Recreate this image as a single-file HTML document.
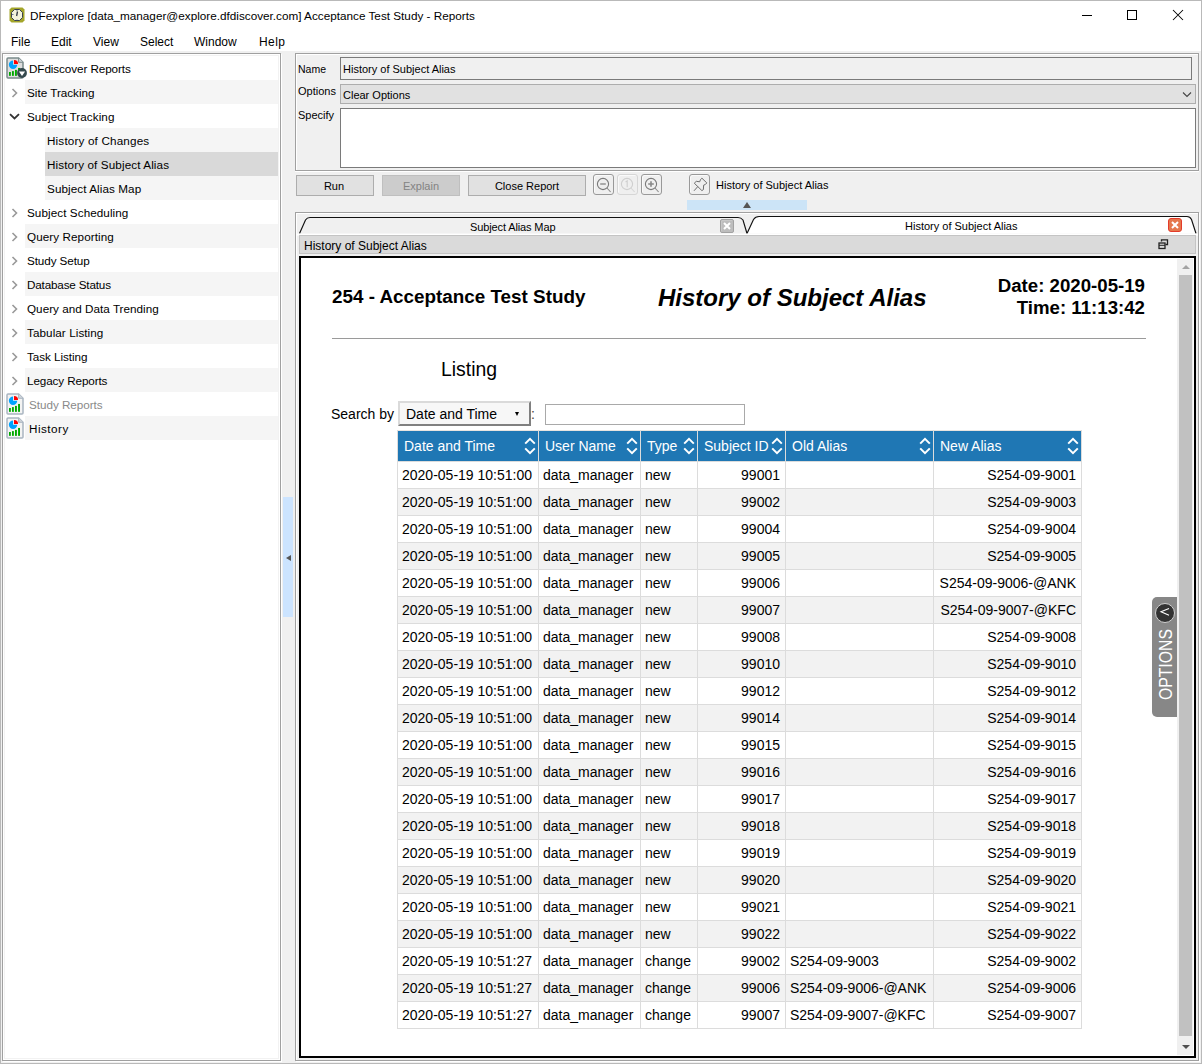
<!DOCTYPE html>
<html><head><meta charset="utf-8">
<style>
*{box-sizing:border-box;margin:0;padding:0}
html,body{width:1202px;height:1064px;overflow:hidden;background:#f0f0f0;font-family:"Liberation Sans",sans-serif;color:#000}
.a{position:absolute}
.t{position:absolute;white-space:nowrap;line-height:1}
#win{position:absolute;left:0;top:0;width:1202px;height:1064px;border:1px solid #b9b9b9;}
#title{left:1px;top:1px;width:1200px;height:50px;background:#fff}
.menu{font-size:12px;top:36px}
.side{font-size:11.7px}
.row{position:absolute;height:24px}
.g{background:#f5f5f5}
.chev{position:absolute;width:6px;height:6px;border-right:1.3px solid #8a8a8a;border-bottom:1.3px solid #8a8a8a}
.btn{position:absolute;background:#e1e1e1;border:1px solid #adadad;font-size:11px;text-align:center;line-height:20px}
.ib{position:absolute;width:21px;height:21px;border:1px solid #999;border-radius:3px;background:#efefef;box-shadow:inset 1px 1px 0 #fafafa}
</style></head><body>
<div id="win"></div>
<div class="a" id="title"></div>
<!-- title icon -->
<svg class="a" style="left:9px;top:7px" width="16" height="16" viewBox="0 0 16 16"><path d="M2.5 0.5H13.5L15.5 2.5V13.5L13.5 15.5H2.5L0.5 13.5V2.5Z" fill="#a3a52a"/><path d="M5.5 2.5H10.5L13.5 5.5V10.5L10.5 13.5H5.5L2.5 10.5V5.5Z" fill="#f3f3dc" stroke="#3a4250" stroke-width="1"/><path d="M8.5 4.5L7.6 9" stroke="#2f3540" stroke-width="1.3"/><path d="M3 7.5H4.5M8 3V4M8 12.5V13.5" stroke="#4a5a80" stroke-width="0.8"/></svg>
<div class="t" style="left:30px;top:10px;font-size:11.74px">DFexplore [data_manager@explore.dfdiscover.com] Acceptance Test Study - Reports</div>
<!-- window controls -->
<div class="a" style="left:1082px;top:15px;width:10px;height:1px;background:#000"></div>
<div class="a" style="left:1127px;top:10px;width:10px;height:10px;border:1px solid #000"></div>
<svg class="a" style="left:1172px;top:9px" width="12" height="12"><path d="M1 1L11 11M11 1L1 11" stroke="#000" stroke-width="1.05"/></svg>
<!-- menu -->
<div class="t menu" style="left:11px">File</div>
<div class="t menu" style="left:51px">Edit</div>
<div class="t menu" style="left:93px">View</div>
<div class="t menu" style="left:140px">Select</div>
<div class="t menu" style="left:194px">Window</div>
<div class="t menu" style="left:259px;letter-spacing:0.4px">Help</div>

<!-- left panel -->
<div class="a" style="left:2px;top:53px;width:279px;height:1008px;border:1px solid #a0a0a0;background:#fff;box-shadow:1px 1px 0 #fff, inset 0 0 0 1px #fff, inset 0 0 0 2px #f2f2f2"></div>
<div id="side">
<svg class="a" style="left:5px;top:56px" width="24" height="24" viewBox="0 0 24 24"><path d="M3 1.9H13.6L18 6.3V21Q18 22 17 22H3Q2 22 2 21V2.9Q2 1.9 3 1.9Z" fill="#dedede" stroke="#7a8a8a" stroke-width="1.5"/><path d="M13.6 1.9V6.3H18" fill="#cfd5da" stroke="#7a8a8a" stroke-width="1"/><path d="M8.05 8.8V4.6A4.2 4.2 0 1 0 12.25 8.8Z" fill="#00a2ff"/><path d="M9 8V3.9A4.1 4.1 0 0 1 13.1 8Z" fill="#ff0000"/><rect x="4" y="16" width="1.85" height="3.85" fill="#00aa00"/><rect x="7" y="15.1" width="1.85" height="4.75" fill="#00aa00"/><rect x="10" y="13.9" width="1.9" height="5.95" fill="#00aa00"/><rect x="13.05" y="11.95" width="1.95" height="7.9" fill="#00aa00"/><circle cx="17" cy="17" r="4.9" fill="#34494d"/><path d="M13.9 15.4H20.1L17 19.9Z" fill="#fff"/></svg>
<div class="t side" style="left:29px;top:63px;color:#000;letter-spacing:-0.088px">DFdiscover Reports</div>
<div class="row g" style="left:25px;top:80px;width:253px"></div>
<svg class="a" style="left:11px;top:88px" width="8" height="10"><path d="M1.5 1L5.5 5L1.5 9" stroke="#999" stroke-width="1.6" fill="none"/></svg>
<div class="t side" style="left:27px;top:87px;color:#000;letter-spacing:0px">Site Tracking</div>
<svg class="a" style="left:9px;top:113px" width="11" height="7"><path d="M1 1.2L5.5 5.5L10 1.2" stroke="#333" stroke-width="1.8" fill="none"/></svg>
<div class="t side" style="left:27px;top:111px;color:#000;letter-spacing:0.067px">Subject Tracking</div>
<div class="row g" style="left:45px;top:128px;width:233px"></div>
<div class="t side" style="left:47px;top:135px;color:#000;letter-spacing:0.165px">History of Changes</div>
<div class="row" style="left:45px;top:152px;width:233px;background:#d9d9d9"></div>
<div class="t side" style="left:47px;top:159px;color:#000;letter-spacing:0.109px">History of Subject Alias</div>
<div class="row g" style="left:45px;top:176px;width:233px"></div>
<div class="t side" style="left:47px;top:183px;color:#000;letter-spacing:0.081px">Subject Alias Map</div>
<svg class="a" style="left:11px;top:208px" width="8" height="10"><path d="M1.5 1L5.5 5L1.5 9" stroke="#999" stroke-width="1.6" fill="none"/></svg>
<div class="t side" style="left:27px;top:207px;color:#000;letter-spacing:0.076px">Subject Scheduling</div>
<div class="row g" style="left:25px;top:224px;width:253px"></div>
<svg class="a" style="left:11px;top:232px" width="8" height="10"><path d="M1.5 1L5.5 5L1.5 9" stroke="#999" stroke-width="1.6" fill="none"/></svg>
<div class="t side" style="left:27px;top:231px;color:#000;letter-spacing:0.071px">Query Reporting</div>
<svg class="a" style="left:11px;top:256px" width="8" height="10"><path d="M1.5 1L5.5 5L1.5 9" stroke="#999" stroke-width="1.6" fill="none"/></svg>
<div class="t side" style="left:27px;top:255px;color:#000;letter-spacing:-0.1px">Study Setup</div>
<div class="row g" style="left:25px;top:272px;width:253px"></div>
<svg class="a" style="left:11px;top:280px" width="8" height="10"><path d="M1.5 1L5.5 5L1.5 9" stroke="#999" stroke-width="1.6" fill="none"/></svg>
<div class="t side" style="left:27px;top:279px;color:#000;letter-spacing:-0.171px">Database Status</div>
<svg class="a" style="left:11px;top:304px" width="8" height="10"><path d="M1.5 1L5.5 5L1.5 9" stroke="#999" stroke-width="1.6" fill="none"/></svg>
<div class="t side" style="left:27px;top:303px;color:#000;letter-spacing:0.023px">Query and Data Trending</div>
<div class="row g" style="left:25px;top:320px;width:253px"></div>
<svg class="a" style="left:11px;top:328px" width="8" height="10"><path d="M1.5 1L5.5 5L1.5 9" stroke="#999" stroke-width="1.6" fill="none"/></svg>
<div class="t side" style="left:27px;top:327px;color:#000;letter-spacing:0.071px">Tabular Listing</div>
<svg class="a" style="left:11px;top:352px" width="8" height="10"><path d="M1.5 1L5.5 5L1.5 9" stroke="#999" stroke-width="1.6" fill="none"/></svg>
<div class="t side" style="left:27px;top:351px;color:#000;letter-spacing:-0.055px">Task Listing</div>
<div class="row g" style="left:25px;top:368px;width:253px"></div>
<svg class="a" style="left:11px;top:376px" width="8" height="10"><path d="M1.5 1L5.5 5L1.5 9" stroke="#999" stroke-width="1.6" fill="none"/></svg>
<div class="t side" style="left:27px;top:375px;color:#000;letter-spacing:-0.108px">Legacy Reports</div>
<svg class="a" style="left:5px;top:392px" width="24" height="24" viewBox="0 0 24 24"><path d="M3 1.9H13.6L18 6.3V21Q18 22 17 22H3Q2 22 2 21V2.9Q2 1.9 3 1.9Z" fill="#f3f3f3" stroke="#a9b5c1" stroke-width="1.5"/><path d="M13.6 1.9V6.3H18" fill="#cfd5da" stroke="#a9b5c1" stroke-width="1"/><path d="M8.05 8.8V4.6A4.2 4.2 0 1 0 12.25 8.8Z" fill="#00a2ff"/><path d="M9 8V3.9A4.1 4.1 0 0 1 13.1 8Z" fill="#ff0000"/><rect x="4" y="16" width="1.85" height="3.85" fill="#00aa00"/><rect x="7" y="15.1" width="1.85" height="4.75" fill="#00aa00"/><rect x="10" y="13.9" width="1.9" height="5.95" fill="#00aa00"/><rect x="13.05" y="11.95" width="1.95" height="7.9" fill="#00aa00"/></svg>
<div class="t side" style="left:29px;top:399px;color:#8a8a8a;letter-spacing:-0.033px">Study Reports</div>
<div class="row g" style="left:25px;top:416px;width:253px"></div>
<svg class="a" style="left:5px;top:416px" width="24" height="24" viewBox="0 0 24 24"><path d="M3 1.9H13.6L18 6.3V21Q18 22 17 22H3Q2 22 2 21V2.9Q2 1.9 3 1.9Z" fill="#f3f3f3" stroke="#a9b5c1" stroke-width="1.5"/><path d="M13.6 1.9V6.3H18" fill="#cfd5da" stroke="#a9b5c1" stroke-width="1"/><path d="M8.05 8.8V4.6A4.2 4.2 0 1 0 12.25 8.8Z" fill="#00a2ff"/><path d="M9 8V3.9A4.1 4.1 0 0 1 13.1 8Z" fill="#ff0000"/><rect x="4" y="16" width="1.85" height="3.85" fill="#00aa00"/><rect x="7" y="15.1" width="1.85" height="4.75" fill="#00aa00"/><rect x="10" y="13.9" width="1.9" height="5.95" fill="#00aa00"/><rect x="13.05" y="11.95" width="1.95" height="7.9" fill="#00aa00"/></svg>
<div class="t side" style="left:29px;top:423px;color:#000;letter-spacing:0.48px">History</div>
</div>

<!-- splitter handle -->
<div class="a" style="left:283px;top:497px;width:10px;height:120px;background:#cce4ff"></div>
<div class="a" style="left:286px;top:554.5px;width:0;height:0;border-top:3.5px solid transparent;border-bottom:3.5px solid transparent;border-right:5px solid #555"></div>

<!-- right group box -->
<div class="a" style="left:295px;top:53px;width:904px;height:118px;border:1px solid #a0a0a0;box-shadow:inset 1px 1px 0 #fff, 0 1px 0 #fff"></div>
<div class="t" style="left:298px;top:64px;font-size:10.5px">Name</div>
<div class="a" style="left:340px;top:57px;width:852px;height:23px;border:1px solid #7a7a7a;background:#f0f0f0"></div>
<div class="t" style="left:343px;top:64px;font-size:11px">History of Subject Alias</div>
<div class="t" style="left:298px;top:86px;font-size:11px">Options</div>
<div class="a" style="left:340px;top:84px;width:856px;height:20px;border:1px solid #adadad;background:#e1e1e1"></div>
<div class="t" style="left:343px;top:90px;font-size:11px">Clear Options</div>
<svg class="a" style="left:1181px;top:90px" width="12" height="9"><path d="M2 2.5L6 6.5L10 2.5" stroke="#444" stroke-width="1.1" fill="none"/></svg>
<div class="t" style="left:298px;top:110px;font-size:11px">Specify</div>
<div class="a" style="left:340px;top:108px;width:856px;height:60px;border:1px solid #7a7a7a;background:#fff"></div>

<!-- buttons -->
<div class="btn" style="left:296px;top:175px;width:78px;height:21px;padding-right:2px">Run</div>
<div class="btn" style="left:382px;top:175px;width:78px;height:21px;background:#cccccc;border-color:#bfbfbf;color:#838383">Explain</div>
<div class="btn" style="left:468px;top:175px;width:118px;height:21px">Close Report</div>
<div class="ib" style="left:593px;top:174px"></div>
<svg class="a" style="left:593px;top:174px" width="21" height="21"><circle cx="10" cy="10" r="5.6" fill="none" stroke="#7a7a7a" stroke-width="1.1"/><path d="M7.2 10H12.8" stroke="#999" stroke-width="1.6"/><path d="M14 14L17.6 18" stroke="#8a8a8a" stroke-width="1.1"/></svg>
<div class="ib" style="left:617px;top:174px;border-color:#d6d6d6"></div>
<svg class="a" style="left:617px;top:174px" width="21" height="21"><circle cx="10" cy="10" r="5.6" fill="none" stroke="#cfcfcf" stroke-width="1.1"/><path d="M8.6 8L10.2 6.8V13.2" fill="none" stroke="#cfcfcf" stroke-width="1.1"/><path d="M14 14L17.6 18" stroke="#d6d6d6" stroke-width="1.1"/></svg>
<div class="ib" style="left:641px;top:174px"></div>
<svg class="a" style="left:641px;top:174px" width="21" height="21"><circle cx="10" cy="10" r="5.6" fill="none" stroke="#7a7a7a" stroke-width="1.1"/><path d="M7.2 10H12.8M10 7.2V12.8" stroke="#888" stroke-width="1.6"/><path d="M14 14L17.6 18" stroke="#8a8a8a" stroke-width="1.1"/></svg>
<div class="ib" style="left:689px;top:174px"></div>
<svg class="a" style="left:689px;top:174px" width="21" height="21"><path d="M12.9 4.2L17.8 8.9L16.3 10.5L14.6 11.2L14.4 15.6L12.9 16.6L5.3 9.2L7.3 7.3L10.7 7.8L11.4 5.8Z" fill="none" stroke="#6e6e6e" stroke-width="1" stroke-linejoin="round"/><path d="M8.7 12.7L5 16.8" stroke="#6e6e6e" stroke-width="1"/></svg>
<div class="t" style="left:716px;top:180px;font-size:11px">History of Subject Alias</div>
<div class="a" style="left:687px;top:200px;width:120px;height:10px;background:#cce4f7"></div>
<div class="a" style="left:743px;top:202px;width:0;height:0;border-left:4px solid transparent;border-right:4px solid transparent;border-bottom:6px solid #555"></div>

<!-- tab frame -->
<div class="a" style="left:295px;top:212px;width:904px;height:849px;border:1px solid #a0a0a0;box-shadow:inset 1px 1px 0 #fff, 1px 1px 0 #fff"></div>
<div id="tabs">
<svg class="a" style="left:295px;top:212px" width="904" height="24" viewBox="0 0 904 24">
<path d="M4.5 21.5L10.5 8Q12 5.5 15 5.5H443Q446 5.5 448 8L452 21.5" fill="#f0f0f0" stroke="#111" stroke-width="1.15"/>
<path d="M452 21.5L458.5 7.5Q460.5 4.5 464 4.5H892Q895 4.5 896.5 7.5L901 21.5" fill="#fff" stroke="#111" stroke-width="1.15"/>
<rect x="1" y="21.6" width="902" height="2" fill="#fff"/>
</svg>
<div class="a" style="left:720px;top:219px;width:14px;height:14px;border-radius:2px;background:#bdbdbd;border:1px solid #a2a2a2;box-shadow:inset 1px 1px 0 #c8c8c8"></div>
<svg class="a" style="left:720px;top:219px" width="14" height="14"><path d="M4 4L10 10M10 4L4 10" stroke="#fff" stroke-width="2"/></svg>
<div class="a" style="left:1168px;top:218px;width:14px;height:14px;border-radius:3px;background:#e5774d;border:1px solid #e33b2a"></div>
<svg class="a" style="left:1168px;top:218px" width="14" height="14"><path d="M4 4L10 10M10 4L4 10" stroke="#fff" stroke-width="2"/></svg>
<div class="t" style="left:470px;top:222px;font-size:11px;letter-spacing:-0.12px">Subject Alias Map</div>
<div class="t" style="left:905px;top:221px;font-size:11px">History of Subject Alias</div>

</div>
<div class="a" style="left:299px;top:235px;width:897px;height:19px;background:#dadada;border:1px solid #c4c4c4"></div>
<div class="t" style="left:304px;top:240px;font-size:12px">History of Subject Alias</div>
<svg class="a" style="left:1158px;top:239px" width="11" height="11"><path d="M3.5 2.5V0.8H9.5V5.5H7.5" fill="none" stroke="#222" stroke-width="1.3"/><rect x="1" y="4" width="6" height="5.5" fill="none" stroke="#222" stroke-width="1.3"/><path d="M1 6.3H7" stroke="#222" stroke-width="1"/></svg>

<!-- report -->
<div class="a" style="left:299px;top:256px;width:897px;height:802px;border:2px solid #000;background:#fff"></div>
<div id="report">
<div class="t" style="left:332px;top:288px;font-size:18.85px;font-weight:bold">254 - Acceptance Test Study</div>
<div class="t" style="left:658px;top:286px;font-size:24px;font-weight:bold;font-style:italic">History of Subject Alias</div>
<div class="t" style="right:57px;top:275px;font-size:18.67px;font-weight:bold;text-align:right;line-height:22px">Date: 2020-05-19<br>Time: 11:13:42</div>
<div class="a" style="left:332px;top:338px;width:814px;height:1px;background:#9a9a9a"></div>
<div class="t" style="left:441px;top:360px;font-size:19.4px">Listing</div>
<div class="t" style="left:331px;top:407px;font-size:14px">Search by</div>
<div class="a" style="left:398px;top:401px;width:133px;height:25px;border:2px solid;border-color:#dadada #808080 #808080 #dadada;background:#f7f7f7"></div>
<div class="t" style="left:406px;top:407px;font-size:14px">Date and Time</div>
<div class="a" style="left:515px;top:412px;width:0;height:0;border-left:2.6px solid transparent;border-right:2.6px solid transparent;border-top:4.5px solid #000"></div>
<div class="t" style="left:531px;top:407px;font-size:14px;color:#444">:</div>
<div class="a" style="left:545px;top:404px;width:200px;height:21px;border:1px solid #a9a9a9;background:#fff"></div>
<div class="a" style="left:398px;top:431px;width:683px;height:30px;background:#1f77b4"></div>
<div class="a" style="left:398px;top:488px;width:683px;height:27px;background:#f2f2f2"></div>
<div class="a" style="left:398px;top:542px;width:683px;height:27px;background:#f2f2f2"></div>
<div class="a" style="left:398px;top:596px;width:683px;height:27px;background:#f2f2f2"></div>
<div class="a" style="left:398px;top:650px;width:683px;height:27px;background:#f2f2f2"></div>
<div class="a" style="left:398px;top:704px;width:683px;height:27px;background:#f2f2f2"></div>
<div class="a" style="left:398px;top:758px;width:683px;height:27px;background:#f2f2f2"></div>
<div class="a" style="left:398px;top:812px;width:683px;height:27px;background:#f2f2f2"></div>
<div class="a" style="left:398px;top:866px;width:683px;height:27px;background:#f2f2f2"></div>
<div class="a" style="left:398px;top:920px;width:683px;height:27px;background:#f2f2f2"></div>
<div class="a" style="left:398px;top:974px;width:683px;height:27px;background:#f2f2f2"></div>
<div class="a" style="left:397px;top:461px;width:685px;height:1px;background:#dcdcdc"></div>
<div class="a" style="left:397px;top:488px;width:685px;height:1px;background:#dcdcdc"></div>
<div class="a" style="left:397px;top:515px;width:685px;height:1px;background:#dcdcdc"></div>
<div class="a" style="left:397px;top:542px;width:685px;height:1px;background:#dcdcdc"></div>
<div class="a" style="left:397px;top:569px;width:685px;height:1px;background:#dcdcdc"></div>
<div class="a" style="left:397px;top:596px;width:685px;height:1px;background:#dcdcdc"></div>
<div class="a" style="left:397px;top:623px;width:685px;height:1px;background:#dcdcdc"></div>
<div class="a" style="left:397px;top:650px;width:685px;height:1px;background:#dcdcdc"></div>
<div class="a" style="left:397px;top:677px;width:685px;height:1px;background:#dcdcdc"></div>
<div class="a" style="left:397px;top:704px;width:685px;height:1px;background:#dcdcdc"></div>
<div class="a" style="left:397px;top:731px;width:685px;height:1px;background:#dcdcdc"></div>
<div class="a" style="left:397px;top:758px;width:685px;height:1px;background:#dcdcdc"></div>
<div class="a" style="left:397px;top:785px;width:685px;height:1px;background:#dcdcdc"></div>
<div class="a" style="left:397px;top:812px;width:685px;height:1px;background:#dcdcdc"></div>
<div class="a" style="left:397px;top:839px;width:685px;height:1px;background:#dcdcdc"></div>
<div class="a" style="left:397px;top:866px;width:685px;height:1px;background:#dcdcdc"></div>
<div class="a" style="left:397px;top:893px;width:685px;height:1px;background:#dcdcdc"></div>
<div class="a" style="left:397px;top:920px;width:685px;height:1px;background:#dcdcdc"></div>
<div class="a" style="left:397px;top:947px;width:685px;height:1px;background:#dcdcdc"></div>
<div class="a" style="left:397px;top:974px;width:685px;height:1px;background:#dcdcdc"></div>
<div class="a" style="left:397px;top:1001px;width:685px;height:1px;background:#dcdcdc"></div>
<div class="a" style="left:397px;top:1028px;width:685px;height:1px;background:#dcdcdc"></div>
<div class="a" style="left:397px;top:430px;width:685px;height:1px;background:#e8e4e0"></div>
<div class="a" style="left:397px;top:430px;width:1px;height:599px;background:#dcdcdc"></div>
<div class="a" style="left:538px;top:430px;width:1px;height:599px;background:#dcdcdc"></div>
<div class="a" style="left:640px;top:430px;width:1px;height:599px;background:#dcdcdc"></div>
<div class="a" style="left:697px;top:430px;width:1px;height:599px;background:#dcdcdc"></div>
<div class="a" style="left:785px;top:430px;width:1px;height:599px;background:#dcdcdc"></div>
<div class="a" style="left:933px;top:430px;width:1px;height:599px;background:#dcdcdc"></div>
<div class="a" style="left:1081px;top:430px;width:1px;height:599px;background:#dcdcdc"></div>
<div class="t" style="left:404px;top:439px;font-size:14px;color:#fff">Date and Time</div>
<svg class="a" style="left:524px;top:437px" width="12" height="18"><path d="M1.2 6.6L6 1.8L10.8 6.6M1.2 11.4L6 16.2L10.8 11.4" stroke="#fff" stroke-width="2" fill="none"/></svg>
<div class="t" style="left:545px;top:439px;font-size:14px;color:#fff">User Name</div>
<svg class="a" style="left:626px;top:437px" width="12" height="18"><path d="M1.2 6.6L6 1.8L10.8 6.6M1.2 11.4L6 16.2L10.8 11.4" stroke="#fff" stroke-width="2" fill="none"/></svg>
<div class="t" style="left:647px;top:439px;font-size:14px;color:#fff">Type</div>
<svg class="a" style="left:683px;top:437px" width="12" height="18"><path d="M1.2 6.6L6 1.8L10.8 6.6M1.2 11.4L6 16.2L10.8 11.4" stroke="#fff" stroke-width="2" fill="none"/></svg>
<div class="t" style="left:704px;top:439px;font-size:14px;color:#fff">Subject ID</div>
<svg class="a" style="left:771px;top:437px" width="12" height="18"><path d="M1.2 6.6L6 1.8L10.8 6.6M1.2 11.4L6 16.2L10.8 11.4" stroke="#fff" stroke-width="2" fill="none"/></svg>
<div class="t" style="left:792px;top:439px;font-size:14px;color:#fff">Old Alias</div>
<svg class="a" style="left:919px;top:437px" width="12" height="18"><path d="M1.2 6.6L6 1.8L10.8 6.6M1.2 11.4L6 16.2L10.8 11.4" stroke="#fff" stroke-width="2" fill="none"/></svg>
<div class="t" style="left:940px;top:439px;font-size:14px;color:#fff">New Alias</div>
<svg class="a" style="left:1067px;top:437px" width="12" height="18"><path d="M1.2 6.6L6 1.8L10.8 6.6M1.2 11.4L6 16.2L10.8 11.4" stroke="#fff" stroke-width="2" fill="none"/></svg>
<div class="t" style="left:402px;top:468px;font-size:14px">2020-05-19 10:51:00</div>
<div class="t" style="left:543px;top:468px;font-size:14px">data_manager</div>
<div class="t" style="left:645px;top:468px;font-size:14px">new</div>
<div class="t" style="right:422px;top:468px;font-size:14px">99001</div>
<div class="t" style="right:126px;top:468px;font-size:14px">S254-09-9001</div>
<div class="t" style="left:402px;top:495px;font-size:14px">2020-05-19 10:51:00</div>
<div class="t" style="left:543px;top:495px;font-size:14px">data_manager</div>
<div class="t" style="left:645px;top:495px;font-size:14px">new</div>
<div class="t" style="right:422px;top:495px;font-size:14px">99002</div>
<div class="t" style="right:126px;top:495px;font-size:14px">S254-09-9003</div>
<div class="t" style="left:402px;top:522px;font-size:14px">2020-05-19 10:51:00</div>
<div class="t" style="left:543px;top:522px;font-size:14px">data_manager</div>
<div class="t" style="left:645px;top:522px;font-size:14px">new</div>
<div class="t" style="right:422px;top:522px;font-size:14px">99004</div>
<div class="t" style="right:126px;top:522px;font-size:14px">S254-09-9004</div>
<div class="t" style="left:402px;top:549px;font-size:14px">2020-05-19 10:51:00</div>
<div class="t" style="left:543px;top:549px;font-size:14px">data_manager</div>
<div class="t" style="left:645px;top:549px;font-size:14px">new</div>
<div class="t" style="right:422px;top:549px;font-size:14px">99005</div>
<div class="t" style="right:126px;top:549px;font-size:14px">S254-09-9005</div>
<div class="t" style="left:402px;top:576px;font-size:14px">2020-05-19 10:51:00</div>
<div class="t" style="left:543px;top:576px;font-size:14px">data_manager</div>
<div class="t" style="left:645px;top:576px;font-size:14px">new</div>
<div class="t" style="right:422px;top:576px;font-size:14px">99006</div>
<div class="t" style="right:126px;top:576px;font-size:14px">S254-09-9006-@ANK</div>
<div class="t" style="left:402px;top:603px;font-size:14px">2020-05-19 10:51:00</div>
<div class="t" style="left:543px;top:603px;font-size:14px">data_manager</div>
<div class="t" style="left:645px;top:603px;font-size:14px">new</div>
<div class="t" style="right:422px;top:603px;font-size:14px">99007</div>
<div class="t" style="right:126px;top:603px;font-size:14px">S254-09-9007-@KFC</div>
<div class="t" style="left:402px;top:630px;font-size:14px">2020-05-19 10:51:00</div>
<div class="t" style="left:543px;top:630px;font-size:14px">data_manager</div>
<div class="t" style="left:645px;top:630px;font-size:14px">new</div>
<div class="t" style="right:422px;top:630px;font-size:14px">99008</div>
<div class="t" style="right:126px;top:630px;font-size:14px">S254-09-9008</div>
<div class="t" style="left:402px;top:657px;font-size:14px">2020-05-19 10:51:00</div>
<div class="t" style="left:543px;top:657px;font-size:14px">data_manager</div>
<div class="t" style="left:645px;top:657px;font-size:14px">new</div>
<div class="t" style="right:422px;top:657px;font-size:14px">99010</div>
<div class="t" style="right:126px;top:657px;font-size:14px">S254-09-9010</div>
<div class="t" style="left:402px;top:684px;font-size:14px">2020-05-19 10:51:00</div>
<div class="t" style="left:543px;top:684px;font-size:14px">data_manager</div>
<div class="t" style="left:645px;top:684px;font-size:14px">new</div>
<div class="t" style="right:422px;top:684px;font-size:14px">99012</div>
<div class="t" style="right:126px;top:684px;font-size:14px">S254-09-9012</div>
<div class="t" style="left:402px;top:711px;font-size:14px">2020-05-19 10:51:00</div>
<div class="t" style="left:543px;top:711px;font-size:14px">data_manager</div>
<div class="t" style="left:645px;top:711px;font-size:14px">new</div>
<div class="t" style="right:422px;top:711px;font-size:14px">99014</div>
<div class="t" style="right:126px;top:711px;font-size:14px">S254-09-9014</div>
<div class="t" style="left:402px;top:738px;font-size:14px">2020-05-19 10:51:00</div>
<div class="t" style="left:543px;top:738px;font-size:14px">data_manager</div>
<div class="t" style="left:645px;top:738px;font-size:14px">new</div>
<div class="t" style="right:422px;top:738px;font-size:14px">99015</div>
<div class="t" style="right:126px;top:738px;font-size:14px">S254-09-9015</div>
<div class="t" style="left:402px;top:765px;font-size:14px">2020-05-19 10:51:00</div>
<div class="t" style="left:543px;top:765px;font-size:14px">data_manager</div>
<div class="t" style="left:645px;top:765px;font-size:14px">new</div>
<div class="t" style="right:422px;top:765px;font-size:14px">99016</div>
<div class="t" style="right:126px;top:765px;font-size:14px">S254-09-9016</div>
<div class="t" style="left:402px;top:792px;font-size:14px">2020-05-19 10:51:00</div>
<div class="t" style="left:543px;top:792px;font-size:14px">data_manager</div>
<div class="t" style="left:645px;top:792px;font-size:14px">new</div>
<div class="t" style="right:422px;top:792px;font-size:14px">99017</div>
<div class="t" style="right:126px;top:792px;font-size:14px">S254-09-9017</div>
<div class="t" style="left:402px;top:819px;font-size:14px">2020-05-19 10:51:00</div>
<div class="t" style="left:543px;top:819px;font-size:14px">data_manager</div>
<div class="t" style="left:645px;top:819px;font-size:14px">new</div>
<div class="t" style="right:422px;top:819px;font-size:14px">99018</div>
<div class="t" style="right:126px;top:819px;font-size:14px">S254-09-9018</div>
<div class="t" style="left:402px;top:846px;font-size:14px">2020-05-19 10:51:00</div>
<div class="t" style="left:543px;top:846px;font-size:14px">data_manager</div>
<div class="t" style="left:645px;top:846px;font-size:14px">new</div>
<div class="t" style="right:422px;top:846px;font-size:14px">99019</div>
<div class="t" style="right:126px;top:846px;font-size:14px">S254-09-9019</div>
<div class="t" style="left:402px;top:873px;font-size:14px">2020-05-19 10:51:00</div>
<div class="t" style="left:543px;top:873px;font-size:14px">data_manager</div>
<div class="t" style="left:645px;top:873px;font-size:14px">new</div>
<div class="t" style="right:422px;top:873px;font-size:14px">99020</div>
<div class="t" style="right:126px;top:873px;font-size:14px">S254-09-9020</div>
<div class="t" style="left:402px;top:900px;font-size:14px">2020-05-19 10:51:00</div>
<div class="t" style="left:543px;top:900px;font-size:14px">data_manager</div>
<div class="t" style="left:645px;top:900px;font-size:14px">new</div>
<div class="t" style="right:422px;top:900px;font-size:14px">99021</div>
<div class="t" style="right:126px;top:900px;font-size:14px">S254-09-9021</div>
<div class="t" style="left:402px;top:927px;font-size:14px">2020-05-19 10:51:00</div>
<div class="t" style="left:543px;top:927px;font-size:14px">data_manager</div>
<div class="t" style="left:645px;top:927px;font-size:14px">new</div>
<div class="t" style="right:422px;top:927px;font-size:14px">99022</div>
<div class="t" style="right:126px;top:927px;font-size:14px">S254-09-9022</div>
<div class="t" style="left:402px;top:954px;font-size:14px">2020-05-19 10:51:27</div>
<div class="t" style="left:543px;top:954px;font-size:14px">data_manager</div>
<div class="t" style="left:645px;top:954px;font-size:14px">change</div>
<div class="t" style="right:422px;top:954px;font-size:14px">99002</div>
<div class="t" style="left:790px;top:954px;font-size:14px">S254-09-9003</div>
<div class="t" style="right:126px;top:954px;font-size:14px">S254-09-9002</div>
<div class="t" style="left:402px;top:981px;font-size:14px">2020-05-19 10:51:27</div>
<div class="t" style="left:543px;top:981px;font-size:14px">data_manager</div>
<div class="t" style="left:645px;top:981px;font-size:14px">change</div>
<div class="t" style="right:422px;top:981px;font-size:14px">99006</div>
<div class="t" style="left:790px;top:981px;font-size:14px">S254-09-9006-@ANK</div>
<div class="t" style="right:126px;top:981px;font-size:14px">S254-09-9006</div>
<div class="t" style="left:402px;top:1008px;font-size:14px">2020-05-19 10:51:27</div>
<div class="t" style="left:543px;top:1008px;font-size:14px">data_manager</div>
<div class="t" style="left:645px;top:1008px;font-size:14px">change</div>
<div class="t" style="right:422px;top:1008px;font-size:14px">99007</div>
<div class="t" style="left:790px;top:1008px;font-size:14px">S254-09-9007-@KFC</div>
<div class="t" style="right:126px;top:1008px;font-size:14px">S254-09-9007</div>
<div class="a" style="left:1177px;top:259px;width:16px;height:796px;background:#f0f0f0"></div>
<div class="a" style="left:1179px;top:275px;width:13px;height:761px;background:#c1c1c1"></div>
<div class="a" style="left:1181.5px;top:265px;width:0;height:0;border-left:4px solid transparent;border-right:4px solid transparent;border-bottom:4px solid #a3a3a3"></div>
<div class="a" style="left:1181.5px;top:1045px;width:0;height:0;border-left:4px solid transparent;border-right:4px solid transparent;border-top:4px solid #505050"></div>
<div class="a" style="left:1152px;top:597px;width:25px;height:120px;background:#878787;border-radius:5px 0 0 5px"></div>
<div class="a" style="left:1155px;top:603px;width:20px;height:20px;border-radius:50%;background:#333;border:1px solid #d0d0d0"></div>
<svg class="a" style="left:1159px;top:607px" width="12" height="10"><path d="M10 1.5L2 4.8L10 8.2" stroke="#fff" stroke-width="1.1" fill="none"/></svg>
<div class="t" style="left:1125.5px;top:656px;width:80px;height:18px;font-size:18px;color:#fff;text-align:center;transform:rotate(-90deg) scaleX(0.877);line-height:18px">OPTIONS</div>
</div>
</body></html>
